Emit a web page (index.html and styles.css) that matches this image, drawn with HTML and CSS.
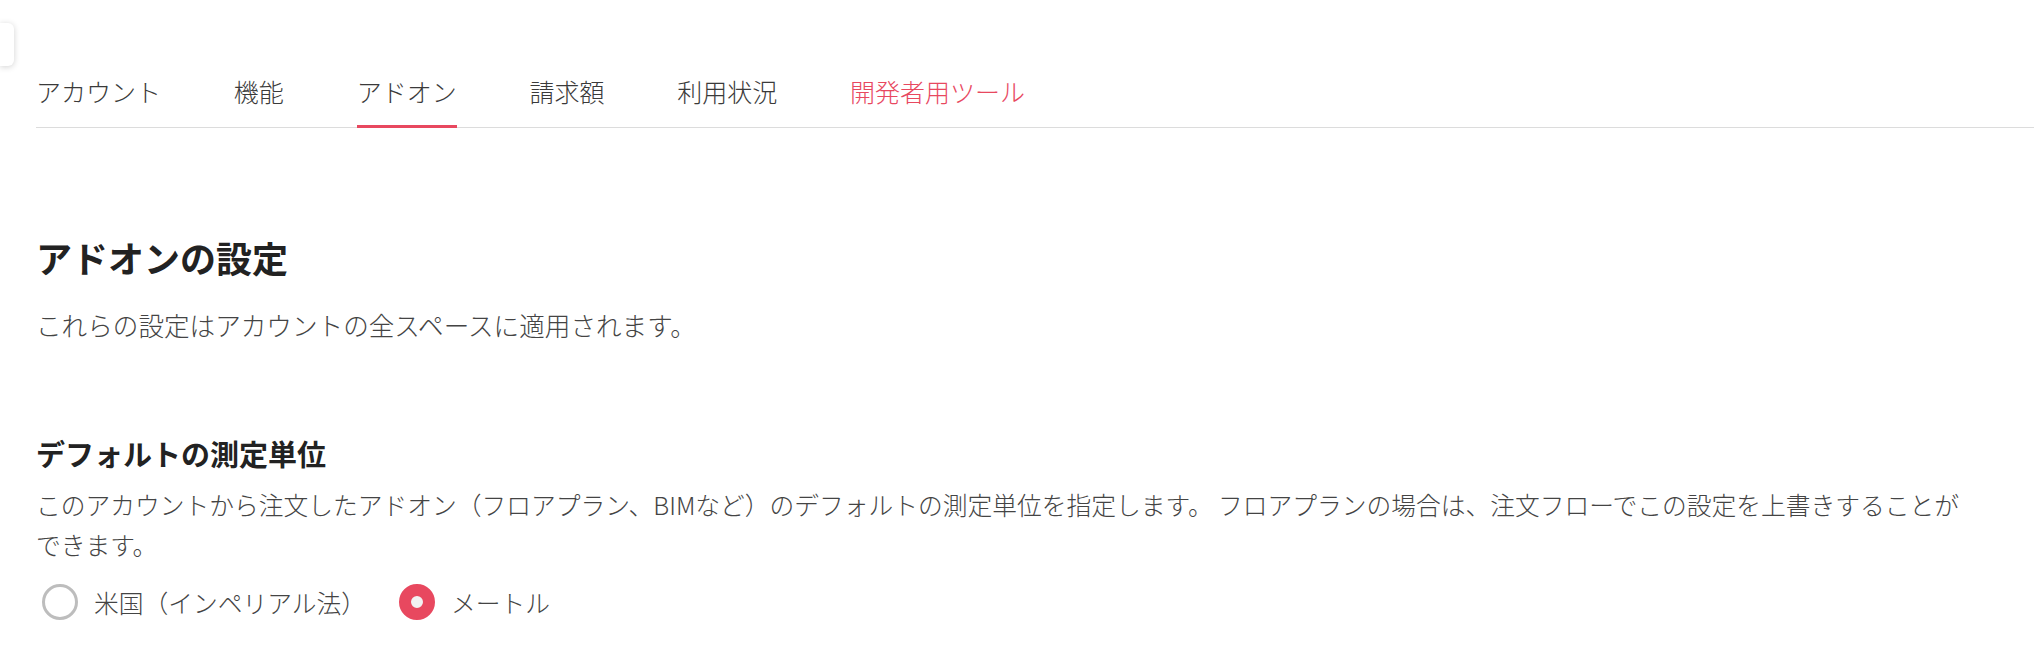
FILE: index.html
```html
<!DOCTYPE html>
<html lang="ja">
<head>
  <meta charset="UTF-8">
  <meta name="viewport" content="width=device-width, initial-scale=1.0">
  <title>アドオンの設定</title>
  <link rel="stylesheet" href="styles.css">
</head>
<body>
  <div class="side-toggle"></div>

  <nav class="tabs">
    <a class="tab" href="#">アカウント</a>
    <a class="tab" href="#">機能</a>
    <a class="tab active" href="#">アドオン</a>
    <a class="tab" href="#">請求額</a>
    <a class="tab" href="#">利用状況</a>
    <a class="tab dev" href="#">開発者用ツール</a>
  </nav>

  <main class="content">
    <h1>アドオンの設定</h1>
    <p class="lead">これらの設定はアカウントの全スペースに適用されます。</p>

    <section class="setting">
      <h2>デフォルトの測定単位</h2>
      <p class="desc">このアカウントから注文したアドオン（フロアプラン、BIMなど）のデフォルトの測定単位を指定します。 フロアプランの場合は、注文フローでこの設定を上書きすることができます。</p>
      <div class="options">
        <label class="option">
          <input type="radio" name="unit" value="imperial">
          <span>米国（インペリアル法）</span>
        </label>
        <label class="option">
          <input type="radio" name="unit" value="metric" checked>
          <span>メートル</span>
        </label>
      </div>
    </section>
  </main>
</body>
</html>
```

FILE: styles.css
```css
body {
  margin: 0;
  padding: 0;
  background: #fff;
  color: #444;
  font-family: "Noto Sans CJK JP", "Noto Sans", sans-serif;
  font-weight: 300;
}

/* 左上のサイドバー開閉ボタン */
.side-toggle {
  position: absolute;
  left: 0;
  top: 23px;
  width: 14px;
  height: 43px;
  background: #fff;
  border-radius: 0 6px 6px 0;
  box-shadow: 0 1px 6px rgba(0, 0, 0, 0.18);
}

.tabs {
  display: flex;
  gap: 72.8px;
  margin-left: 36px;
  padding-top: 73px;
  border-bottom: 1px solid #dcdcdc;
}

.tab {
  font-size: 25px;
  line-height: 36px;
  padding-bottom: 16px;
  margin-bottom: -1px;
  border-bottom: 3px solid transparent;
  color: #3a3a3a;
  text-decoration: none;
}

.tab.active {
  border-bottom-color: #e8485f;
}

.tab.dev {
  color: #e8485f;
}

.content {
  padding: 0 58px 0 36px;
}

h1 {
  margin: 104px 0 0;
  font-size: 36px;
  line-height: 50px;
  font-weight: 700;
  color: #222;
}

.lead {
  margin: 25px 0 0;
  font-size: 25.6px;
  line-height: 36px;
}

.setting {
  margin-top: 90px;
}

h2 {
  margin: 0;
  font-size: 29px;
  line-height: 40px;
  font-weight: 700;
  color: #222;
}

.desc {
  margin: 11px 0 0;
  font-size: 24.75px;
  line-height: 40px;
}

.options {
  display: flex;
  gap: 27px;
  margin-top: 20px;
}

.option {
  display: flex;
  align-items: center;
  gap: 16px;
  font-size: 24.75px;
  line-height: 36px;
  cursor: pointer;
}

.option input {
  appearance: none;
  margin: 0 0 0 6px;
  width: 36px;
  height: 36px;
  border: 3px solid #bdbdbd;
  border-radius: 50%;
  box-sizing: border-box;
  background: #fff;
}

.option input:checked {
  border: 12px solid #e8485f;
  background: #f2f2f2;
}
```
